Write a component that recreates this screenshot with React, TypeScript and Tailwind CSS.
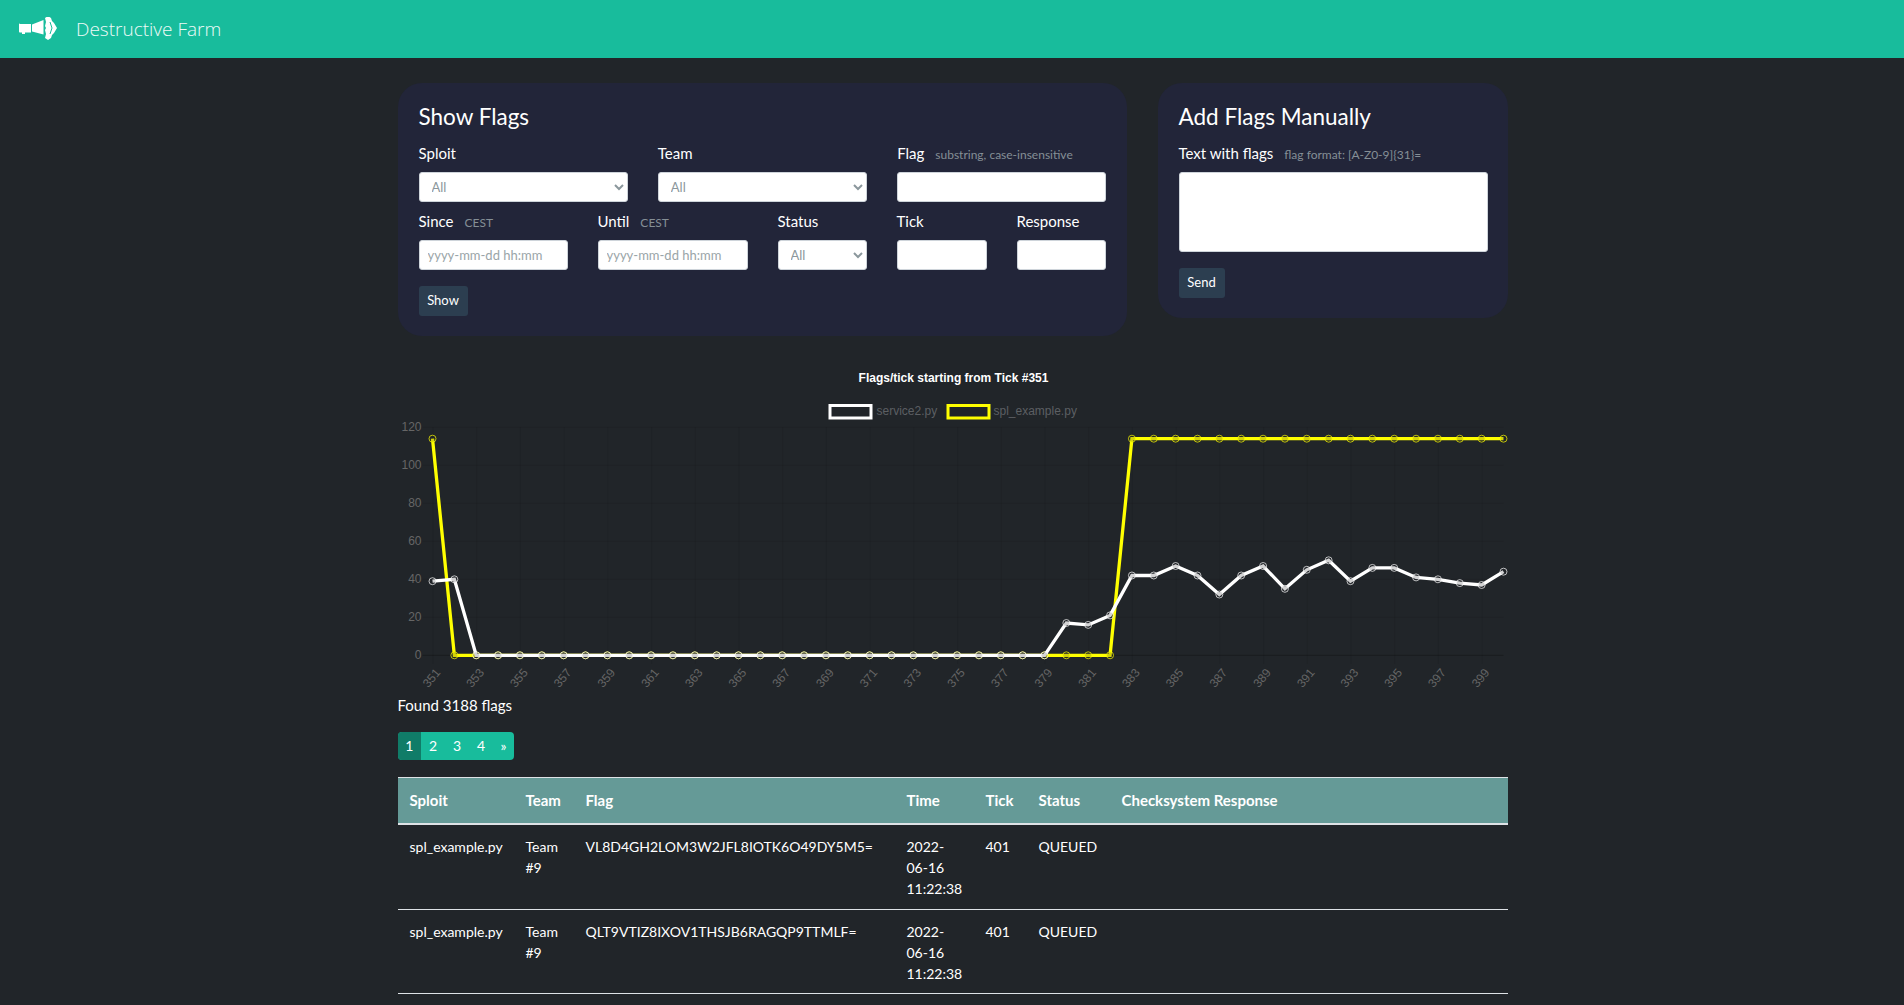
import React from "react"

const service2 = [39, 40, 0, ...Array(26).fill(0), 17, 16, 21, 42, 42, 47, 42, 32, 42, 47, 35, 45, 50, 39, 46, 46, 41, 40, 38, 37, 44]
const splExample = [114, ...Array(31).fill(0), ...Array(18).fill(114)]

const ticks = Array.from({ length: 50 }, (_, i) => 351 + i)
const xAt = (i: number) => 432 + i * 21.857
const yAt = (v: number) => 655.3 - v * 1.9

const rows = [
  { sploit: "spl_example.py", team: "Team #9", flag: "VL8D4GH2LOM3W2JFL8IOTK6O49DY5M5=", time: "2022-06-16 11:22:38", tick: 401, status: "QUEUED" },
  { sploit: "spl_example.py", team: "Team #9", flag: "QLT9VTIZ8IXOV1THSJB6RAGQP9TTMLF=", time: "2022-06-16 11:22:38", tick: 401, status: "QUEUED" },
]

const Logo = () => (
  <svg width="42" height="24" viewBox="18 17 42 24" fill="white" className="shrink-0">
    <path d="M20 24h11v8.500h-6v1.500h-3v-1.500h-2c-.6 0-1-.5-1-1v-7.500c0-.3.4-.5 1-.5z" />
    <path d="M32 24.500L43.500 20v14.500L32 31.500z" />
    <path d="M45 18l3-2 3 2 1 3 2 2 3 5-3 5-2 2-1 3-3 2-3-2 1-4-1-4 1-2-1-2 1-4z" />
    <path d="M50 22l2 6-2 6" fill="none" stroke="#18bc9c" strokeWidth="1" />
  </svg>
)

type FieldProps = { label: string; hint?: string; tight?: boolean; className: string; children: React.ReactNode }

const Field = ({ label, hint, tight, className, children }: FieldProps) => (
  <div className={className}>
    <div className={`flex items-baseline h-[22.5px] text-[15px] leading-[22.5px] text-white ${tight ? "mb-[7px]" : "mb-2"}`}>
      <span>{label}</span>
      {hint && <span className="ml-[11px] text-[12px] text-[#858f96]">{hint}</span>}
    </div>
    {children}
  </div>
)

const inputClass = "block w-full h-[30px] bg-white border border-[#ced4da] rounded-[3px] px-[8px] text-[13px] text-[#495057] placeholder:text-[#9aa5a8]"

const Select = () => (
  <select className="block w-full h-[30px] bg-white border border-[#ced4da] rounded-[3px] pl-[8px] text-[13px] text-[#8b979c]">
    <option>All</option>
  </select>
)

const Chart = () => {
  const line = (data: number[]) => data.map((v, i) => `${xAt(i)},${yAt(v)}`).join(" ")
  return (
    <svg viewBox="397.500 365 1110 330" className="block w-[1110px] h-[330px] font-['Liberation_Sans',sans-serif]">
      <text x="953" y="382" textAnchor="middle" fontSize="12" fontWeight="700" fill="#fff">Flags/tick starting from Tick #351</text>

      <rect x="829.500" y="405.500" width="41" height="12.500" fill="none" stroke="#fff" strokeWidth="3" />
      <text x="876" y="415" fontSize="12" fill="#5c5f63">service2.py</text>
      <rect x="947.500" y="405.500" width="41" height="12.500" fill="none" stroke="#ff0" strokeWidth="3" />
      <text x="993" y="415" fontSize="12" fill="#5c5f63">spl_example.py</text>

      {[0, 20, 40, 60, 80, 100, 120].map((v) => (
        <g key={v}>
          <line x1="422" x2="1503" y1={yAt(v)} y2={yAt(v)} stroke={v === 0 ? "rgba(0,0,0,0.25)" : "rgba(0,0,0,0.07)"} />
          <text x="421" y={yAt(v) + 4} textAnchor="end" fontSize="12" fill="#666">{v}</text>
        </g>
      ))}
      {ticks.map((t, i) =>
        i % 2 === 0 ? (
          <g key={t}>
            <line x1={xAt(i) + 0.5} x2={xAt(i) + 0.5} y1="427" y2="664" stroke="rgba(0,0,0,0.07)" />
            <text x={xAt(i) - 1} y="682" textAnchor="middle" fontSize="12" fill="#666" transform={`rotate(-50 ${xAt(i) - 1} 678)`}>{t}</text>
          </g>
        ) : null,
      )}

      <polyline points={line(splExample)} fill="none" stroke="#ff0" strokeWidth="3.300" />
      {splExample.map((v, i) => (
        <circle key={i} cx={xAt(i)} cy={yAt(v)} r="3.500" fill="rgba(33,37,41,0.2)" stroke="rgba(255,255,0,0.7)" />
      ))}
      <polyline points={line(service2)} fill="none" stroke="#fff" strokeWidth="3.300" />
      {service2.map((v, i) => (
        <circle key={i} cx={xAt(i)} cy={yAt(v)} r="3.500" fill="rgba(33,37,41,0.2)" stroke="rgba(255,255,255,0.7)" />
      ))}
    </svg>
  )
}

export default function App() {
  return (
    <div className="min-h-screen bg-[#212529] text-white font-['Lato',sans-serif] pl-[1px]">
      <nav className="h-[58px] bg-[#18bc9c] flex items-center pl-[18px] -ml-[1px]">
        <Logo />
        <span className="ml-[16px] text-[19px] font-light font-['Open_Sans',sans-serif] text-[#ecfaf7]">Destructive Farm</span>
      </nav>

      <main className="w-[1110px] mx-auto pt-[25px]">
        <div className="flex items-start gap-[31px]">
          <section className="w-[729px] bg-[#222539] rounded-[24px] pl-[21px] pr-5 py-5">
            <h4 className="text-[22.5px] leading-[27px] mb-3">Show Flags</h4>
            <div className="grid grid-cols-3 gap-x-[30px]">
              <Field tight label="Sploit" className="min-w-0"><Select /></Field>
              <Field tight label="Team" className="min-w-0"><Select /></Field>
              <Field tight label="Flag" hint="substring, case-insensitive" className="min-w-0"><input className={inputClass} /></Field>
            </div>
            <div className="flex gap-x-[30px] mt-2">
              <Field label="Since" hint="CEST" className="w-[149px]"><input className={inputClass} placeholder="yyyy-mm-dd hh:mm" /></Field>
              <Field label="Until" hint="CEST" className="w-[150px]"><input className={inputClass} placeholder="yyyy-mm-dd hh:mm" /></Field>
              <Field label="Status" className="w-[89px]"><Select /></Field>
              <Field label="Tick" className="w-[90px]"><input className={inputClass} /></Field>
              <Field label="Response" className="w-[89px]"><input className={inputClass} /></Field>
            </div>
            <button className="block mt-4 h-[30px] w-[49px] bg-[#2c3e50] rounded-[3px] text-[13px] text-white">Show</button>
          </section>

          <section className="w-[350px] bg-[#222539] rounded-[24px] pl-[21px] pr-5 py-5">
            <h4 className="text-[22.5px] leading-[27px] mb-3">Add Flags Manually</h4>
            <Field tight label="Text with flags" hint="flag format: [A-Z0-9]{31}=" className="">
              <textarea className="block w-full h-[80px] bg-white border border-[#ced4da] rounded-[3px] resize-none" />
            </Field>
            <button className="block mt-4 h-[30px] w-[46px] bg-[#2c3e50] rounded-[3px] text-[13px] text-white">Send</button>
          </section>
        </div>

        <div className="mt-[28.5px]">
          <Chart />
        </div>

        <p className="-mt-px text-[15px] leading-[22.5px]">Found 3188 flags</p>

        <ul className="flex w-fit mt-[15.5px] rounded-[4px] overflow-hidden bg-[#18bc9c] text-[14px] leading-[28px] text-white">
          <li className="w-[23.500px] text-center bg-[#107c68]">1</li>
          <li className="w-[24px] text-center">2</li>
          <li className="w-[24px] text-center">3</li>
          <li className="w-[24px] text-center">4</li>
          <li className="w-[21px] text-center">»</li>
        </ul>

        <table className="w-full table-fixed mt-[17px] text-[14px] leading-[21px]">
          <colgroup>
            <col className="w-[116px]" />
            <col className="w-[60px]" />
            <col className="w-[321px]" />
            <col className="w-[79px]" />
            <col className="w-[53px]" />
            <col className="w-[83px]" />
            <col />
          </colgroup>
          <thead>
            <tr className="bg-[#659a97] text-left text-[15px] border-t border-b-[2px] border-[#dee2e6]">
              {["Sploit", "Team", "Flag", "Time", "Tick", "Status", "Checksystem Response"].map((h) => (
                <th key={h} className="px-3 h-[47px] font-bold whitespace-nowrap">{h}</th>
              ))}
            </tr>
          </thead>
          <tbody>
            {rows.map((r) => (
              <tr key={r.flag} className="border-b border-[#dee2e6] align-top">
                <td className="px-3 pt-[11px] pb-[9.5px]">{r.sploit}</td>
                <td className="px-3 pt-[11px] pb-[9.5px]">{r.team}</td>
                <td className="px-3 pt-[11px] pb-[9.5px]">{r.flag}</td>
                <td className="px-3 pt-[11px] pb-[9.5px]">{r.time}</td>
                <td className="px-3 pt-[11px] pb-[9.5px]">{r.tick}</td>
                <td className="px-3 pt-[11px] pb-[9.5px]">{r.status}</td>
                <td className="px-3 pt-[11px] pb-[9.5px]"></td>
              </tr>
            ))}
          </tbody>
        </table>
      </main>
    </div>
  )
}
